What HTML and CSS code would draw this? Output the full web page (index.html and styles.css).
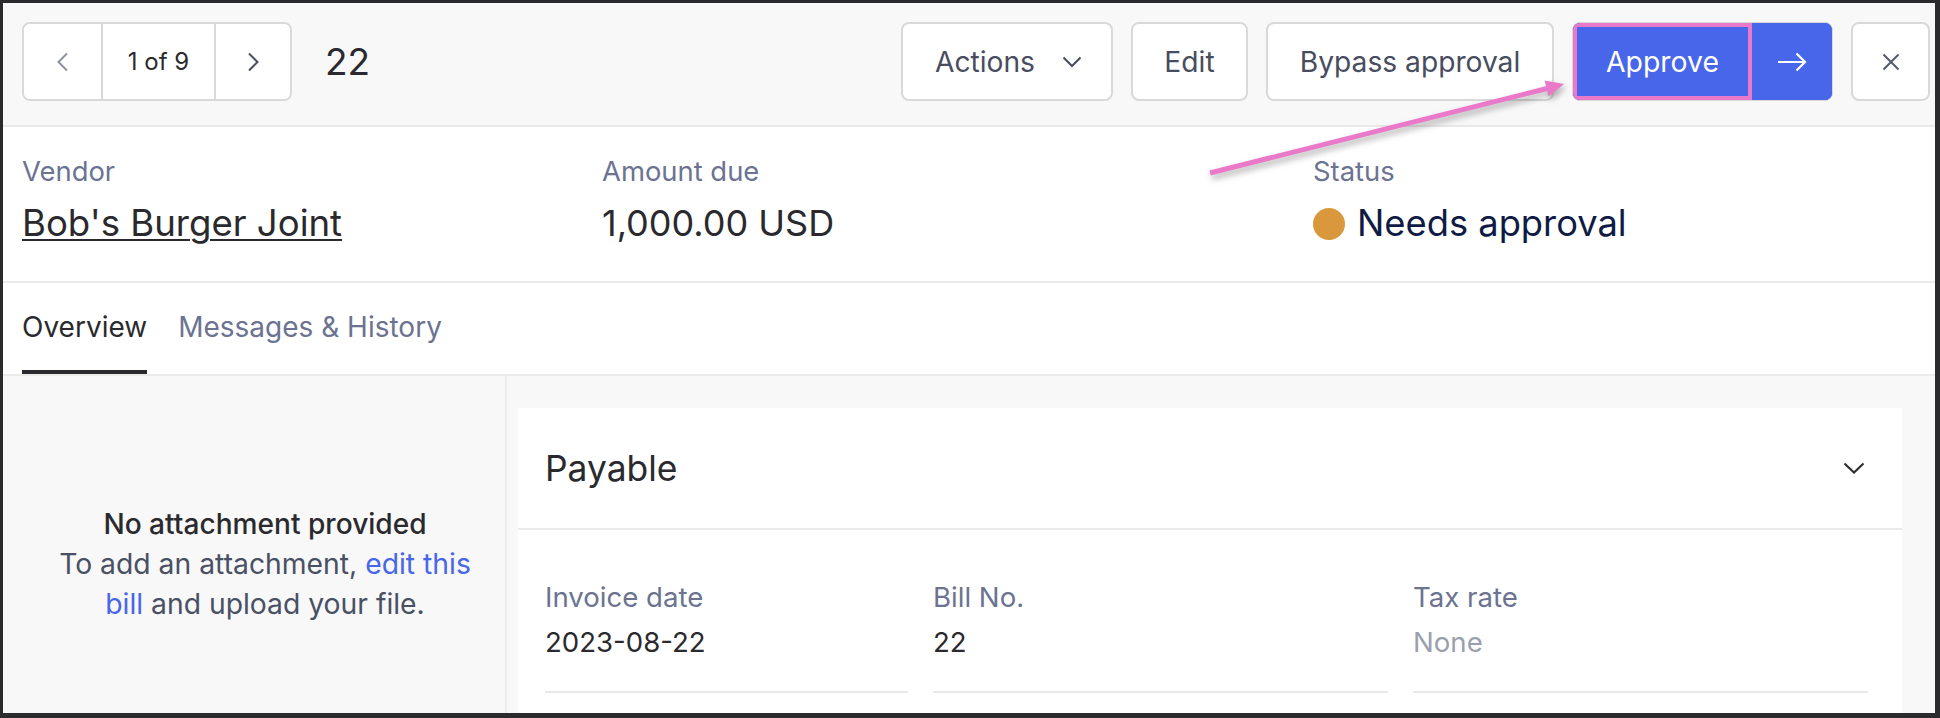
FILE: index.html
```html
<!DOCTYPE html>
<html lang="en">
<head>
<meta charset="utf-8">
<title>Bill 22</title>
<link rel="stylesheet" href="styles.css">
</head>
<body>
<div class="frame">
  <header class="topbar">
    <div class="pager">
      <button class="pg-cell pg-prev" aria-label="Previous">
        <svg width="14" height="20" viewBox="0 0 14 20"><path d="M11 1.5 L2.5 10 L11 18.5" fill="none" stroke="#8d929f" stroke-width="2"/></svg>
      </button>
      <div class="pg-cell pg-count">1 of 9</div>
      <button class="pg-cell pg-next" aria-label="Next">
        <svg width="14" height="20" viewBox="0 0 14 20"><path d="M3 1.5 L11.5 10 L3 18.5" fill="none" stroke="#4b5163" stroke-width="2"/></svg>
      </button>
    </div>
    <div class="bill-no">22</div>
    <div class="actions">
      <button class="btn btn-actions">Actions
        <svg class="caret" width="20" height="12" viewBox="0 0 20 12"><path d="M1.5 1.5 L10 10 L18.5 1.5" fill="none" stroke="#474d5e" stroke-width="2"/></svg>
      </button>
      <button class="btn btn-edit">Edit</button>
      <button class="btn btn-bypass">Bypass approval</button>
      <div class="split">
        <button class="split-main">Approve</button>
        <button class="split-next" aria-label="Approve and next">
          <svg width="30" height="20" viewBox="0 0 30 20"><path d="M1 10 H28 M19.5 1.5 L28 10 L19.5 18.5" fill="none" stroke="#ffffff" stroke-width="2.2"/></svg>
        </button>
      </div>
      <button class="btn btn-close" aria-label="Close">
        <svg width="18" height="18" viewBox="0 0 18 18"><path d="M1.5 1.5 L16.5 16.5 M16.5 1.5 L1.5 16.5" fill="none" stroke="#555b6b" stroke-width="2"/></svg>
      </button>
    </div>
  </header>

  <section class="summary">
    <div class="sum-col">
      <div class="sum-label">Vendor</div>
      <a class="sum-value vendor-link" href="#">Bob's Burger Joint</a>
    </div>
    <div class="sum-col">
      <div class="sum-label">Amount due</div>
      <div class="sum-value">1,000.00 USD</div>
    </div>
    <div class="sum-col">
      <div class="sum-label">Status</div>
      <div class="sum-value status"><span class="dot"></span>Needs approval</div>
    </div>
  </section>

  <nav class="tabs">
    <div class="tab tab-active">Overview</div>
    <div class="tab">Messages &amp; History</div>
  </nav>

  <main class="lower">
    <aside class="attach">
      <div class="attach-title">No attachment provided</div>
      <div class="attach-text">
        <div class="attach-line">To add an attachment, <a href="#" class="link">edit this</a></div>
        <div class="attach-line"><a href="#" class="link">bill</a> and upload your file.</div>
      </div>
    </aside>
    <div class="content">
      <div class="card">
        <div class="card-head">
          <div class="card-title">Payable</div>
          <svg width="22" height="12" viewBox="0 0 22 12"><path d="M1.5 1.5 L11 10.5 L20.5 1.5" fill="none" stroke="#2a2a2e" stroke-width="2"/></svg>
        </div>
        <div class="card-body">
          <div class="field">
            <div class="f-label">Invoice date</div>
            <div class="f-value">2023-08-22</div>
          </div>
          <div class="field">
            <div class="f-label">Bill No.</div>
            <div class="f-value">22</div>
          </div>
          <div class="field">
            <div class="f-label">Tax rate</div>
            <div class="f-value f-empty">None</div>
          </div>
        </div>
      </div>
    </div>
  </main>
</div>

<svg class="annotation" width="1940" height="718" viewBox="0 0 1940 718">
  <g class="anno-arrow">
    <line x1="1210" y1="173" x2="1549" y2="88" stroke="#ea79c9" stroke-width="5"/>
    <polygon points="1564,84 1544.6,80.4 1548.6,96.4" fill="#ea79c9"/>
  </g>
</svg>
</body>
</html>
```

FILE: styles.css
```css
* { box-sizing: border-box; }

html, body {
  margin: 0;
  padding: 0;
}

body {
  background: #2b2b2e;
  width: 1940px;
  height: 718px;
  overflow: hidden;
  position: relative;
  font-family: Inter, "Liberation Sans", sans-serif;
  color: #2a2a2e;
}

.frame {
  margin: 3px 5px 5px 3px;
  width: 1932px;
  height: 710px;
  background: #ffffff;
  overflow: hidden;
  display: flex;
  flex-direction: column;
}

button {
  font-family: inherit;
  cursor: pointer;
}

/* ---------- top bar ---------- */
.topbar {
  flex: 0 0 auto;
  height: 124px;
  background: #f8f8f8;
  border-bottom: 2px solid #e9e9e9;
  display: flex;
  align-items: flex-start;
  padding: 19px 5px 0 19px;
}

.pager {
  display: flex;
  height: 79px;
  border: 2px solid #d9d9d9;
  border-radius: 8px;
  background: #ffffff;
  overflow: hidden;
}

.pg-cell {
  display: flex;
  align-items: center;
  justify-content: center;
  background: #ffffff;
  border: none;
  padding: 0;
  font-size: 24px;
  color: #2a2a2e;
}

.pg-prev { width: 77px; }
.pg-count { width: 113px; border-left: 2px solid #d9d9d9; }
.pg-next { width: 76px; border-left: 2px solid #d9d9d9; }

.bill-no {
  height: 79px;
  display: flex;
  align-items: center;
  margin-left: 33px;
  font-size: 37px;
  color: #2a2a2e;
}

.actions {
  margin-left: auto;
  display: flex;
  gap: 18px;
}

.btn {
  height: 79px;
  background: #ffffff;
  border: 2px solid #d9d9d9;
  border-radius: 8px;
  font-size: 28.2px;
  color: #474d5e;
  display: flex;
  align-items: center;
  justify-content: center;
  padding: 0;
}

.btn-actions { width: 212px; gap: 27px; padding-left: 3px; }
.btn-edit { width: 117px; }
.btn-bypass { width: 288px; }
.btn-close { width: 79px; }

.split {
  display: flex;
  height: 79px;
  border: 1px solid #d9d9d9;
  border-radius: 8px;
  background: #4766e9;
  overflow: hidden;
}

.split-main {
  width: 179px;
  background: #4766e9;
  color: #ffffff;
  border: none;
  font-size: 28.4px;
  box-shadow: inset 0 0 0 4px #ea79c9;
  padding: 0;
}

.split-next {
  width: 80px;
  background: #4766e9;
  border: none;
  display: flex;
  align-items: center;
  justify-content: center;
  padding: 0;
}

/* ---------- summary ---------- */
.summary {
  flex: 0 0 auto;
  display: grid;
  grid-template-columns: 580px 711px 1fr;
  padding: 27px 19px 0 19px;
  height: 156px;
  border-bottom: 2px solid #ebebeb;
}

.sum-label {
  font-size: 27.4px;
  line-height: 35px;
  color: #6b7391;
}

.sum-value {
  display: inline-flex;
  align-items: center;
  margin-top: 11px;
  font-size: 36px;
  line-height: 47px;
  color: #2a2a2e;
}

.vendor-link {
  font-size: 36.6px;
  text-decoration: underline;
  text-decoration-thickness: 2px;
  text-underline-offset: 3px;
}

.status {
  color: #0f1b45;
  font-size: 36.3px;
  gap: 12px;
}

.dot {
  width: 32px;
  height: 32px;
  border-radius: 50%;
  background: #d9983c;
  flex: 0 0 auto;
}

/* ---------- tabs ---------- */
.tabs {
  flex: 0 0 auto;
  display: flex;
  gap: 31px;
  padding: 0 19px;
  height: 93px;
  border-bottom: 2px solid #ebebeb;
  background: #ffffff;
}

.tab {
  font-size: 28px;
  line-height: 35px;
  padding-top: 27px;
  height: 91px;
  color: #6b7391;
  border-bottom: 4px solid transparent;
}

.tab-active {
  color: #2a2a2e;
  border-bottom-color: #2a2a2e;
}

/* ---------- lower ---------- */
.lower {
  flex: 1 1 auto;
  display: flex;
  background: #f8f8f8;
}

.attach {
  width: 504px;
  flex: 0 0 auto;
  border-right: 2px solid #ececec;
  padding: 128px 0 0 22px;
  display: flex;
  flex-direction: column;
  align-items: center;
  text-align: center;
}

.attach-title {
  font-size: 28.1px;
  font-weight: 500;
  line-height: 40px;
  color: #2a2a2e;
}

.attach-text {
  font-size: 28.3px;
  line-height: 40px;
  color: #4a5064;
}

.link {
  color: #4766e9;
  text-decoration: none;
}

.content {
  flex: 1 1 auto;
  padding: 32px 34px 0 11px;
}

.card {
  background: #ffffff;
  border-radius: 2px;
  height: 100%;
}

.card-head {
  height: 122px;
  border-bottom: 2px solid #ebebeb;
  display: flex;
  align-items: center;
  justify-content: space-between;
  padding: 0 37px 0 27px;
}

.card-title {
  font-size: 35.4px;
  color: #2a2a2e;
}

.card-body {
  display: grid;
  grid-template-columns: 363px 455px 455px;
  column-gap: 25px;
  padding: 50px 34px 0 27px;
}

.field {
  border-bottom: 2px solid #e9e9e9;
  padding-bottom: 31px;
}

.f-label {
  font-size: 27.6px;
  line-height: 35px;
  color: #6b7391;
}

.f-value {
  margin-top: 10px;
  font-size: 27.6px;
  line-height: 35px;
  color: #2a2a2e;
}

.f-empty { color: #9b9fac; }

/* ---------- annotation overlay ---------- */
.annotation {
  position: absolute;
  left: 0;
  top: 0;
  pointer-events: none;
}

.anno-arrow {
  filter: drop-shadow(2px 4px 3px rgba(0, 0, 0, 0.3));
}
```
